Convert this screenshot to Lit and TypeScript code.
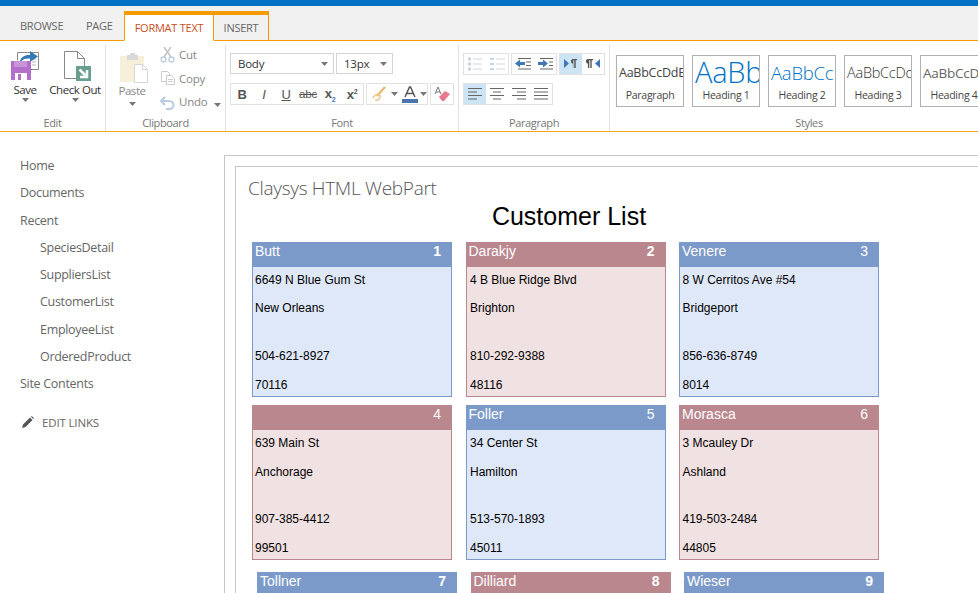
import { LitElement, html, css, svg } from 'lit';
import { customElement } from 'lit/decorators.js';

const NAV = [
  ['Home', 0],
  ['Documents', 0],
  ['Recent', 0],
  ['SpeciesDetail', 1],
  ['SuppliersList', 1],
  ['CustomerList', 1],
  ['EmployeeList', 1],
  ['OrderedProduct', 1],
  ['Site Contents', 0],
] as const;

const CUSTOMERS = [
  ['Butt', '6649 N Blue Gum St', 'New Orleans', '504-621-8927', '70116'],
  ['Darakjy', '4 B Blue Ridge Blvd', 'Brighton', '810-292-9388', '48116'],
  ['Venere', '8 W Cerritos Ave #54', 'Bridgeport', '856-636-8749', '8014'],
  ['', '639 Main St', 'Anchorage', '907-385-4412', '99501'],
  ['Foller', '34 Center St', 'Hamilton', '513-570-1893', '45011'],
  ['Morasca', '3 Mcauley Dr', 'Ashland', '419-503-2484', '44805'],
  ['Tollner', '', '', '', ''],
  ['Dilliard', '', '', '', ''],
  ['Wieser', '', '', '', ''],
];

// number in the card header renders heavier on these
const BOLD = [1, 2, 7, 8, 9];

const caret = svg`<path d="M0 0h7l-3.500 4z" fill="#777"/>`;
const caretIcon = html`<svg class="caret" width="7" height="4">${caret}</svg>`;

const ICONS: Record<string, unknown> = {
  bullets: svg`<g fill="#c3d3e8"><circle cx="2.500" cy="3" r="1.700"/><circle cx="2.500" cy="8" r="1.700"/><circle cx="2.500" cy="13" r="1.700"/></g><path d="M6 3h9M6 8h9M6 13h9" stroke="#d4d6d8"/>`,
  numbers: svg`<path d="M1 3h4M1 8h4M1 13h4" stroke="#c8d6e8" stroke-width="2"/><path d="M7 3h9M7 8h9M7 13h9" stroke="#d4d6d8"/>`,
  outdent: svg`<path d="M0 7.500l5-4v2.500h5v3H5v2.500z" fill="#3f78b5"/><path d="M3 2.500h13M11 6h5M11 9.500h5M3 13h13" stroke="#666" stroke-width="1.100"/>`,
  indent: svg`<path d="M11 7.500l-5-4v2.500H1v3h5v2.500z" fill="#3f78b5"/><path d="M3 2.500h13M12 6h4M12 9.500h4M3 13h13" stroke="#666" stroke-width="1.100"/>`,
  ltr: svg`<path d="M1 3l5 4.500-5 4.500z" fill="#3f78b5"/><path d="M7 3h7v1.200h-1.300V12h-1.400V4.200h-1V12H9.900V7.800A2.500 2.500 0 0 1 9.500 3z" fill="#555"/>`,
  rtl: svg`<path d="M1 3h7v1.200H6.700V12H5.300V4.200h-1V12H2.900V7.800A2.500 2.500 0 0 1 2.500 3z" fill="#555"/><path d="M15 3l-5 4.500 5 4.500z" fill="#3f78b5"/>`,
  left: svg`<path d="M1 2.500h14M1 6h9M1 9.500h14M1 13h9" stroke="#666" stroke-width="1.100"/>`,
  center: svg`<path d="M1 2.500h14M4 6h8M1 9.500h14M4 13h8" stroke="#666" stroke-width="1.100"/>`,
  right: svg`<path d="M1 2.500h14M6 6h9M1 9.500h14M6 13h9" stroke="#666" stroke-width="1.100"/>`,
  justify: svg`<path d="M1 2.500h14M1 6h14M1 9.500h14M1 13h14" stroke="#666" stroke-width="1.100"/>`,
};

@customElement('app-root')
export class AppRoot extends LitElement {
  static styles = css`
    :host {
      display: block;
      height: 593px;
      overflow: hidden;
      background: #fff;
      font-family: 'Open Sans', 'Liberation Sans', sans-serif;
      color: #444;
    }
    .suite { height: 6px; background: #0072c6; }
    .tabs {
      display: flex;
      align-items: flex-end;
      height: 34px;
      padding-left: 20px;
      background: #f1f1f1;
      border-bottom: 1px solid #f59b00;
    }
    .tab {
      height: 26px;
      line-height: 24px;
      font-size: 11px;
      letter-spacing: -0.250px;
      color: #666;
    }
    .tab.browse { width: 66px; }
    .tab.page { width: 38px; }
    .tab.boxed {
      box-sizing: content-box;
      height: 25px;
      line-height: 26px;
      margin-bottom: -1px;
      border: 1px solid #f59b00;
      border-top-width: 4px;
      text-align: center;
    }
    .tab.active { width: 88px; background: #fff; border-bottom-color: #fff; color: #c9501c; }
    .tab.insert { width: 54px; border-left: 0; }
    .ribbon {
      display: flex;
      height: 90px;
      border-bottom: 1px solid #f5a623;
      font-size: 11px;
      letter-spacing: -0.250px;
      color: #444;
    }
    .group {
      display: flex;
      flex: none;
      flex-direction: column;
      box-sizing: border-box;
      margin-top: 4px;
      border-right: 1px solid #e1e1e1;
    }
    .group-body { flex: 1; min-height: 0; }
    .group-label {
      height: 16px;
      line-height: 16px;
      text-align: center;
      font-size: 11px;
      letter-spacing: -0.350px;
      color: #777;
    }
    .edit { width: 106px; }
    .edit .group-body { display: flex; }
    .big {
      display: flex;
      flex-direction: column;
      align-items: center;
      width: 50px;
      padding-top: 6px;
      font-size: 11.500px;
      letter-spacing: -0.450px;
      color: #333;
    }
    .big svg { display: block; flex: none; }
    .big span { line-height: 16px; margin-top: 1px; white-space: nowrap; }
    .checkout svg:first-child { margin-left: 5px; }
    .clip { width: 120px; }
    .clip .group-body { display: flex; }
    .big.paste { width: 52px; padding-top: 8px; color: #888; }
    .paste svg:first-child { margin-left: 3px; }
    .paste span { margin-top: 0; }
    .paste .caret { margin-top: 3px; }
    .clip-list { margin: -2px 0 0 2px; }
    .clip-row { display: flex; align-items: center; gap: 3px; height: 23.500px; font-size: 11.500px; color: #888; }
    .clip-row .caret { margin: 6px 0 0 4px; }
    .font { width: 233px; }
    .font .group-body { padding: 8px 0 0 4px; }
    .row { display: flex; gap: 2px; }
    .row.second { margin-top: 9px; }
    .para .row.second { margin-top: 8px; }
    .select {
      display: flex;
      align-items: center;
      justify-content: space-between;
      box-sizing: border-box;
      height: 21px;
      padding: 0 5px 0 7px;
      border: 1px solid #d4d4d4;
      font-size: 11.500px;
      color: #333;
    }
    .select.family { width: 104px; }
    .select.size { width: 57px; }
    .btns {
      display: flex;
      align-items: center;
      box-sizing: border-box;
      height: 22px;
      border: 1px solid #e1e1e1;
    }
    .fmt {
      display: flex;
      align-items: center;
      justify-content: center;
      width: 22px;
      height: 20px;
      color: #555;
      font-size: 13px;
      font-family: 'Liberation Sans', sans-serif;
    }
    .fmt svg { display: block; }
    .fmt.on { background: #cde4f5; }
    .fmt.small { font-size: 11.500px; }
    .fmt sub, .fmt sup { font-size: 7px; }
    .fmt sub { color: #3f78b5; }
    .fmt.hl { width: 34px; gap: 2px; }
    .fmt.color { width: 26px; gap: 2px; }
    .para { width: 151px; }
    .para .group-body { padding: 8px 0 0 4px; }
    .styles { flex: 1; min-width: 0; border-right: 0; }
    .styles .group-body { padding: 10px 0 0 6px; overflow: hidden; }
    .styles .group-label { padding-left: 30px; }
    .gallery { display: flex; gap: 8px; width: 400px; }
    .style {
      box-sizing: border-box;
      flex: none;
      width: 68px;
      height: 52px;
      border: 1px solid #aeb2b8;
      text-align: center;
      overflow: hidden;
      font-size: 10.500px;
      color: #444;
    }
    .sample { height: 32px; line-height: 34px; white-space: nowrap; padding-left: 2px; text-align: left; overflow: hidden; }
    .s-para { font-size: 12.500px; color: #444; }
    .s-h1 { font-size: 29px; color: #0072c6; font-weight: 300; line-height: 32px; }
    .s-h2 { font-size: 18.500px; color: #0072c6; font-weight: 300; }
    .s-h3 { font-size: 14.500px; color: #333; font-weight: 300; }
    .s-h4 { font-size: 13.500px; color: #666; }
    .layout { display: flex; }
    nav { width: 224px; padding-top: 20px; flex: none; font-size: 12.500px; color: #666; letter-spacing: -0.300px; }
    .nav-item { height: 27.300px; line-height: 27.300px; padding-left: 20px; }
    .nav-item.sub { padding-left: 40px; }
    .edit-links {
      display: flex;
      align-items: center;
      gap: 8px;
      margin-top: 11px;
      padding-left: 22px;
      height: 27px;
      font-size: 11.500px;
      letter-spacing: -0.150px;
    }
    .outer {
      flex: 1;
      margin-top: 23px;
      padding: 10px 0 0 10px;
      border: 1px solid #c6c6c6;
      border-right: 0;
      height: 460px;
    }
    .inner {
      border: 1px solid #c6c6c6;
      border-right: 0;
      height: 460px;
      padding: 10px 0 0 12px;
    }
    .part-title { font-size: 19px; font-weight: 300; color: #555; line-height: 22px; letter-spacing: -0.300px; }
    h1 {
      margin: 3px 0 0;
      width: 642px;
      text-align: center;
      font: 400 25px/28px 'Liberation Sans', sans-serif;
      color: #000;
    }
    .cards {
      display: grid;
      grid-template-columns: repeat(3, 200px);
      column-gap: 13.500px;
      row-gap: 8px;
      margin: 12px 0 0 4px;
      font-family: 'Liberation Sans', sans-serif;
    }
    .card {
      box-sizing: border-box;
      width: 200px;
      height: 155px;
      border: 1px solid #7c9ac9;
      background: #dfe8f9;
      color: #000;
      font-size: 12px;
    }
    .card:nth-child(even) { border-color: #bb878e; background: #f0e1e2; }
    /* third row of the list sits a bit further in */
    .card.last { margin: 4px 0 0 5px; }
    .head {
      display: flex;
      justify-content: space-between;
      height: 25px;
      margin: -1px -1px 0;
      padding: 0 11px 0 3px;
      line-height: 18px;
      background: #7c9ac9;
      color: #fff;
      font-size: 14px;
    }
    .card:nth-child(even) .head { background: #bb878e; }
    .head b { font-weight: 400; }
    .head b.heavy { font-weight: 700; }
    .body div { line-height: 14px; padding-left: 2px; margin-top: 14.500px; }
    .body div:first-child { margin-top: 6px; }
    .body div.phone { margin-top: 33.500px; }
    /* first row falls half a pixel differently */
    .card:nth-child(-n + 3) .body div:nth-child(2) { margin-top: 14px; }
    .card:nth-child(-n + 3) .body div.phone { margin-top: 34px; }
    .card:nth-child(3n + 2) .body div { padding-left: 3.500px; }
    .card:nth-child(3n) .body div { padding-left: 2.500px; }
  `;

  private _bigSave() {
    return svg`<svg width="28" height="30" viewBox="0 0 28 30">
      <path d="M6.500 1.500h21v17H20" fill="#fff" stroke="#8a8a8a"/>
      <path d="M6.500 1.500v8" fill="none" stroke="#8a8a8a"/>
      <path d="M20 8h5M21 11h4M21 14h4" stroke="#b5b5b5"/>
      <path d="M9 10c1-4 5-6.500 10-6V0l8 5.500-8 5.500V7.500c-4-.5-7 .5-9 3z" fill="#3579b8"/>
      <path d="M0 10h20v19H0z" fill="#b36fc9"/>
      <path d="M3 10h13v6H3z" fill="#c795d8"/>
      <path d="M4 22h12v7H4z" fill="#fff"/>
      <path d="M7 23h3v6H7z" fill="#b36fc9"/>
    </svg>`;
  }

  private _bigCheckout() {
    return svg`<svg width="27" height="30" viewBox="0 0 27 30">
      <path d="M.5.500h13l7 7v8M.5.500v27h12" fill="#fff" stroke="#8a8a8a"/>
      <path d="M13.500.500v7h7" fill="none" stroke="#8a8a8a"/>
      <path d="M12 15h15v15H12z" fill="#6a9f8f"/>
      <path d="M15.500 18.500l7 7M23 19v7h-7" fill="none" stroke="#fff" stroke-width="2.500"/>
    </svg>`;
  }

  private _bigPaste() {
    return svg`<svg width="28" height="30" viewBox="0 0 28 30">
      <path d="M0 3h24v26H0z" fill="#f8efda"/>
      <path d="M7 2h11v5H7z" fill="#d9d9d9"/>
      <path d="M10 0h5v3h-5z" fill="#d9d9d9"/>
      <path d="M14.500 11.500h8l5 5v13h-13z" fill="#fff" stroke="#d6d6d6"/>
      <path d="M22.500 11.500v5h5" fill="none" stroke="#d6d6d6"/>
    </svg>`;
  }

  private _smallIcon(name: string) {
    const d = {
      cut: svg`<path d="M4 0l7 10M11 0L4 10" stroke="#bfc4c9" stroke-width="1.500"/><circle cx="3.500" cy="12.500" r="2.500" fill="none" stroke="#b8cde4" stroke-width="1.300"/><circle cx="11.500" cy="12.500" r="2.500" fill="none" stroke="#b8cde4" stroke-width="1.300"/>`,
      copy: svg`<path d="M1.500 1.500h6l2 2v8h-8z" fill="#fff" stroke="#ccc"/><path d="M6.500 5.500h5l3 3v6h-8z" fill="#fff" stroke="#ccc"/><path d="M8 9.500h5M8 11.500h5" stroke="#ccc"/>`,
      undo: svg`<path d="M5 3L1 7l4 4" fill="none" stroke="#b8cde4" stroke-width="2"/><path d="M2 7h7c6 0 6 8 0 8H6" fill="none" stroke="#b8cde4" stroke-width="2"/>`,
    }[name];
    return svg`<svg width="16" height="16" viewBox="0 0 16 16">${d}</svg>`;
  }

  private _fmtIcon(name: string, on = false) {
    return html`<span class="fmt ${on ? 'on' : ''}"><svg width="16" height="16" viewBox="0 0 16 16">${ICONS[name]}</svg></span>`;
  }

  private _ribbon() {
    return html`
      <div class="ribbon">
        <div class="group edit">
          <div class="group-body">
            <div class="big">${this._bigSave()}<span>Save</span>${caretIcon}</div>
            <div class="big checkout">${this._bigCheckout()}<span>Check Out</span>${caretIcon}</div>
          </div>
          <div class="group-label">Edit</div>
        </div>
        <div class="group clip">
          <div class="group-body">
            <div class="big paste">${this._bigPaste()}<span>Paste</span>${caretIcon}</div>
            <div class="clip-list">
              <div class="clip-row">${this._smallIcon('cut')}Cut</div>
              <div class="clip-row">${this._smallIcon('copy')}Copy</div>
              <div class="clip-row">${this._smallIcon('undo')}Undo${caretIcon}</div>
            </div>
          </div>
          <div class="group-label">Clipboard</div>
        </div>
        <div class="group font">
          <div class="group-body">
            <div class="row">
              <div class="select family">Body${caretIcon}</div>
              <div class="select size">13px${caretIcon}</div>
            </div>
            <div class="row second">
              <div class="btns">
                <span class="fmt"><b>B</b></span>
                <span class="fmt"><i>I</i></span>
                <span class="fmt"><u>U</u></span>
                <span class="fmt small"><s>abc</s></span>
                <span class="fmt"><b>x<sub>2</sub></b></span>
                <span class="fmt"><b>x<sup>2</sup></b></span>
              </div>
              <div class="btns">
                <span class="fmt hl">
                  <svg width="18" height="18" viewBox="0 0 18 18"><path d="M6 11l8-9" stroke="#e8b36a" stroke-width="2"/><path d="M2 13c2-5 8-5 7-1s-5 4-4 2" fill="none" stroke="#eec58f" stroke-width="1.500"/></svg>
                  ${caretIcon}
                </span>
                <span class="fmt color">
                  <svg width="16" height="18" viewBox="0 0 16 18"><path d="M3 12L7.500 2h1L13 12M4.500 8.500h7" fill="none" stroke="#555" stroke-width="1.500"/><path d="M0 14h16v4H0z" fill="#4a74b0"/></svg>
                  ${caretIcon}
                </span>
              </div>
              <div class="btns">
                <span class="fmt">
                  <svg width="18" height="18" viewBox="0 0 18 18"><path d="M2 9l3-7 3 7M3 7h4" fill="none" stroke="#777"/><path d="M6 12l6-6 5 3-6 7H9z" fill="#e8798a"/></svg>
                </span>
              </div>
            </div>
          </div>
          <div class="group-label">Font</div>
        </div>
        <div class="group para">
          <div class="group-body">
            <div class="row">
              <div class="btns">${this._fmtIcon('bullets')}${this._fmtIcon('numbers')}</div>
              <div class="btns">${this._fmtIcon('outdent')}${this._fmtIcon('indent')}</div>
              <div class="btns">${this._fmtIcon('ltr', true)}${this._fmtIcon('rtl')}</div>
            </div>
            <div class="row second">
              <div class="btns">
                ${this._fmtIcon('left', true)}${this._fmtIcon('center')}${this._fmtIcon('right')}${this._fmtIcon('justify')}
              </div>
            </div>
          </div>
          <div class="group-label">Paragraph</div>
        </div>
        <div class="group styles">
          <div class="group-body">
            <div class="gallery">
              <div class="style"><div class="sample s-para">AaBbCcDdEe</div>Paragraph</div>
              <div class="style"><div class="sample s-h1">AaBb</div>Heading 1</div>
              <div class="style"><div class="sample s-h2">AaBbCc</div>Heading 2</div>
              <div class="style"><div class="sample s-h3">AaBbCcDd</div>Heading 3</div>
              <div class="style"><div class="sample s-h4">AaBbCcDd</div>Heading 4</div>
            </div>
          </div>
          <div class="group-label">Styles</div>
        </div>
      </div>
    `;
  }

  render() {
    return html`
      <div class="suite"></div>
      <div class="tabs">
        <div class="tab browse">BROWSE</div>
        <div class="tab page">PAGE</div>
        <div class="tab boxed active">FORMAT TEXT</div>
        <div class="tab boxed insert">INSERT</div>
      </div>
      ${this._ribbon()}
      <div class="layout">
        <nav>
          ${NAV.map(([label, sub]) => html`<div class="nav-item ${sub ? 'sub' : ''}">${label}</div>`)}
          <div class="edit-links">
            <svg width="12" height="12" viewBox="0 0 12 12"><path d="M0 12l1-3.500L8 1.500 10.500 4l-7 7zM9 .8l.8-.8L12 2.200l-.8.800z" fill="#555"/></svg>
            EDIT LINKS
          </div>
        </nav>
        <div class="outer">
          <div class="inner">
            <div class="part-title">Claysys HTML WebPart</div>
            <h1>Customer List</h1>
            <div class="cards">
              ${CUSTOMERS.map(
                ([name, addr, city, phone, zip], i) => html`
                  <div class="card ${i > 5 ? 'last' : ''}">
                    <div class="head"><span>${name}</span><b class=${BOLD.includes(i + 1) ? 'heavy' : ''}>${i + 1}</b></div>
                    <div class="body">
                      <div>${addr}</div>
                      <div>${city}</div>
                      <div class="phone">${phone}</div>
                      <div>${zip}</div>
                    </div>
                  </div>
                `,
              )}
            </div>
          </div>
        </div>
      </div>
    `;
  }
}
